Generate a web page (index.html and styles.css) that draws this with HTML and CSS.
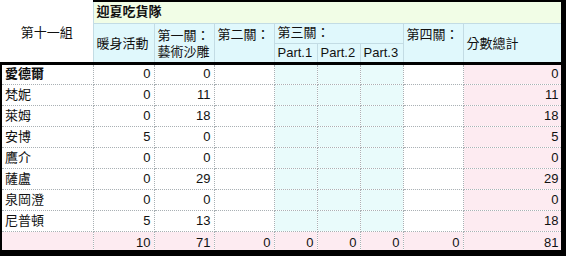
FILE: index.html
```html
<!DOCTYPE html>
<html>
<head>
<meta charset="utf-8">
<link rel="stylesheet" href="styles.css">
</head>
<body>
<div class="sheet">
<table class="grid">
<colgroup>
<col class="c-name"><col class="c-w"><col class="c-s"><col class="c-s"><col class="c-p"><col class="c-p"><col class="c-p"><col class="c-s"><col class="c-tot">
</colgroup>
<thead>
<tr class="h1">
<th class="group" rowspan="3">第十一組</th>
<th class="team" colspan="8">迎夏吃貨隊</th>
</tr>
<tr class="h2">
<th class="hd mid" rowspan="2">暖身活動</th>
<th class="hd mid two" rowspan="2">第一關：<br>藝術沙雕</th>
<th class="hd top" rowspan="2">第二關：</th>
<th class="hd" colspan="3">第三關：</th>
<th class="hd top" rowspan="2">第四關：</th>
<th class="hd mid low" rowspan="2">分數總計</th>
</tr>
<tr class="h3">
<th class="hd part">Part.1</th>
<th class="hd part">Part.2</th>
<th class="hd part">Part.3</th>
</tr>
</thead>
<tbody>
<tr class="first"><td class="nm bold">愛德爾</td><td>0</td><td>0</td><td></td><td class="pt"></td><td class="pt"></td><td class="pt"></td><td></td><td class="sum">0</td></tr>
<tr><td class="nm">梵妮</td><td>0</td><td>11</td><td></td><td class="pt"></td><td class="pt"></td><td class="pt"></td><td></td><td class="sum">11</td></tr>
<tr><td class="nm">萊姆</td><td>0</td><td>18</td><td></td><td class="pt"></td><td class="pt"></td><td class="pt"></td><td></td><td class="sum">18</td></tr>
<tr><td class="nm">安博</td><td>5</td><td>0</td><td></td><td class="pt"></td><td class="pt"></td><td class="pt"></td><td></td><td class="sum">5</td></tr>
<tr><td class="nm">鷹介</td><td>0</td><td>0</td><td></td><td class="pt"></td><td class="pt"></td><td class="pt"></td><td></td><td class="sum">0</td></tr>
<tr><td class="nm">薩盧</td><td>0</td><td>29</td><td></td><td class="pt"></td><td class="pt"></td><td class="pt"></td><td></td><td class="sum">29</td></tr>
<tr><td class="nm">泉岡澄</td><td>0</td><td>0</td><td></td><td class="pt"></td><td class="pt"></td><td class="pt"></td><td></td><td class="sum">0</td></tr>
<tr><td class="nm">尼普頓</td><td>5</td><td>13</td><td></td><td class="pt"></td><td class="pt"></td><td class="pt"></td><td></td><td class="sum">18</td></tr>
<tr class="total"><td class="nm"></td><td>10</td><td>71</td><td>0</td><td>0</td><td>0</td><td>0</td><td>0</td><td>81</td></tr>
</tbody>
</table>
</div>
</body>
</html>
```

FILE: styles.css
```css
html, body {
  margin: 0;
  padding: 0;
  background: #ffffff;
}

.sheet {
  width: 566px;
  height: 256px;
  box-sizing: border-box;
  border-right: 5px solid #000;
  border-bottom: 6px solid #000;
  overflow: hidden;
  font-family: "Liberation Sans", "Noto Sans CJK TC", sans-serif;
  font-size: 13px;
  color: #111;
}

.grid {
  border-collapse: collapse;
  table-layout: fixed;
  width: 561px;
}

.c-name { width: 92px; }
.c-w { width: 61px; }
.c-s { width: 60px; }
.c-p { width: 43px; }
.c-tot { width: 99px; }

th, td {
  padding: 0;
  overflow: hidden;
  white-space: nowrap;
  line-height: 16px;
}

th {
  font-weight: normal;
  text-align: left;
}

.h1 { height: 22px; }
.h2 { height: 20px; }
.h3 { height: 20px; }

.group {
  background: #fff;
  text-align: center;
  vertical-align: middle;
  font-size: 13px;
  border-right: 1px solid #c3dce4;
  padding-top: 4px;
}

.team {
  background: #f1fde6;
  border-top: 2px solid #000;
  border-bottom: 1px solid #c3dce4;
  font-weight: bold;
  padding-left: 3px;
  vertical-align: middle;
}

.hd {
  background: #e0f8fc;
  border: 1px solid #c3dce4;
  padding-left: 3px;
  vertical-align: middle;
}

.hd.top {
  vertical-align: top;
  padding-top: 3px;
}

.hd.low {
  padding-top: 5px;
}

.hd.mid {
  padding-top: 2px;
}

.hd.part {
  padding-left: 3px;
}

tbody tr { height: 21px; }

td {
  border: 1px dotted #a9b0b4;
  text-align: right;
  padding-right: 3px;
  vertical-align: middle;
  background: #fff;
}

td.nm {
  text-align: left;
  padding-left: 3px;
  padding-right: 0;
  border-left: 2px solid #000;
  font-size: 13px;
}

td.bold { font-weight: bold; }

td.pt { background: #e9fbfb; }

td.sum { background: #fdebf1; }

tr.first td { border-top: 3px solid #000; }

tr.total { height: 18px; }

tr.total td {
  background: #fdebf1;
  border-bottom: none;
  padding-top: 3px;
}
```
